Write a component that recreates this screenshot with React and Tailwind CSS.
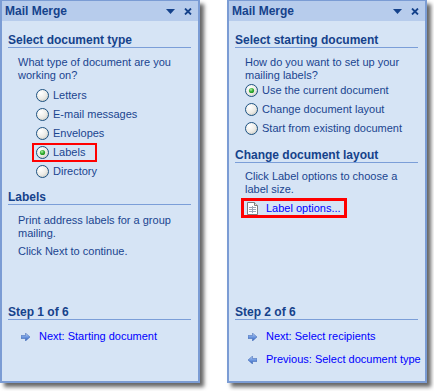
import React from "react";

const font = { fontFamily: '"Liberation Sans", Arial, sans-serif' };

function Radio({ checked }) {
  return (
    <svg width="13" height="13" viewBox="0 0 13 13" className="shrink-0">
      <defs>
        <radialGradient id="radioFill" cx="35%" cy="30%" r="80%">
          <stop offset="0" stopColor="#ffffff" />
          <stop offset="0.6" stopColor="#ecebe6" />
          <stop offset="1" stopColor="#c9c8c0" />
        </radialGradient>
        <radialGradient id="radioDot" cx="40%" cy="35%" r="70%">
          <stop offset="0" stopColor="#b6f2a8" />
          <stop offset="0.5" stopColor="#3cb43c" />
          <stop offset="1" stopColor="#1a8c1a" />
        </radialGradient>
      </defs>
      <circle cx="6.5" cy="6.5" r="6" fill="url(#radioFill)" stroke="#1c5180" strokeWidth="1" />
      {checked && <circle cx="6.5" cy="6.5" r="2.6" fill="url(#radioDot)" />}
    </svg>
  );
}

function Arrow({ back }) {
  return (
    <svg width="9" height="8" viewBox="0 0 9 8" className="shrink-0">
      <defs>
        <linearGradient id="arrowFill" x1="0" y1="0" x2="0" y2="1">
          <stop offset="0" stopColor="#b9d1f6" />
          <stop offset="0.5" stopColor="#6f99e0" />
          <stop offset="1" stopColor="#2f5fbf" />
        </linearGradient>
      </defs>
      <polygon
        points={back ? "9,2.5 4.5,2.5 4.5,0 0,4 4.5,8 4.5,5.5 9,5.5" : "0,2.5 4.5,2.5 4.5,0 9,4 4.5,8 4.5,5.5 0,5.5"}
        fill="url(#arrowFill)"
        stroke="#3a63b0"
        strokeWidth="0.5"
      />
    </svg>
  );
}

function LabelIcon() {
  return (
    <svg width="11" height="13" viewBox="0 0 11 13" className="shrink-0">
      <path d="M0.5 0.5 H7.5 L10.5 3.5 V12.5 H0.5 Z" fill="#ffffff" stroke="#7d7d7d" />
      <path d="M7.5 0.5 V3.5 H10.5" fill="#e4e4e4" stroke="#7d7d7d" />
      <g stroke="#9aa6b8" strokeWidth="1">
        <line x1="2" y1="5.5" x2="9" y2="5.5" />
        <line x1="2" y1="7.5" x2="9" y2="7.5" />
        <line x1="2" y1="9.5" x2="9" y2="9.5" />
        <line x1="5.5" y1="4" x2="5.5" y2="11" />
      </g>
    </svg>
  );
}

function TitleBar() {
  return (
    <div className="h-[20px] flex items-center justify-between bg-[#b7ccec] pl-[3px] pr-[6px]">
      <span className="text-[12px] font-bold text-[#15428b] leading-none">Mail Merge</span>
      <div className="flex items-center gap-[9px]">
        <svg width="9" height="5" viewBox="0 0 9 5">
          <polygon points="0,0 9,0 4.5,5" fill="#15428b" />
        </svg>
        <svg width="8" height="7" viewBox="0 0 8 7">
          <path d="M1 0.5 L7 6.5 M7 0.5 L1 6.5" stroke="#15428b" strokeWidth="1.8" />
        </svg>
      </div>
    </div>
  );
}

function Header({ children, className = "" }) {
  return (
    <div className={"text-[12px] font-bold leading-[13px] text-[#15428b] border-b border-[#7b9ed8] " + className}>
      {children}
    </div>
  );
}

function RadioRow({ label, checked }) {
  return (
    <div className="h-[19px] flex items-center gap-[4px]">
      <Radio checked={checked} />
      <span className="whitespace-nowrap">{label}</span>
    </div>
  );
}

function LinkRow({ label, back, className = "" }) {
  return (
    <div className={"h-[19px] flex items-center gap-[9px] pl-[13px] text-[#0000ff] " + className}>
      <Arrow back={back} />
      <span className="whitespace-nowrap">{label}</span>
    </div>
  );
}

function Panel({ children }) {
  return (
    <div className="w-[200px] h-[383px] shrink-0 flex flex-col bg-[#d6e4f5] border-x-2 border-b-2 border-t border-[#7b9cd4] shadow-[4px_4px_4px_rgba(0,0,0,0.6)]">
      <TitleBar />
      <div className="flex-1 flex flex-col pl-[6px] pr-[7px] text-[11px] text-[#1a4590]">{children}</div>
    </div>
  );
}

export default function App() {
  return (
    <div className="w-[434px] h-[391px] bg-white flex gap-[27px]" style={font}>
      <Panel>
        <Header className="mt-[13px]">Select document type</Header>
        <p className="mt-[8px] pl-[10px] leading-[13px]">
          What type of document are you
          <br />
          working on?
        </p>
        <div className="mt-[4px] pl-[28px]">
          <RadioRow label="Letters" />
          <RadioRow label="E-mail messages" />
          <RadioRow label="Envelopes" />
          <div className="relative">
            <RadioRow label="Labels" checked />
            <div className="absolute left-[-4px] top-0 w-[65px] h-[19px] border-2 border-[#ff0000]" />
          </div>
          <RadioRow label="Directory" />
        </div>
        <Header className="mt-[10px]">Labels</Header>
        <p className="mt-[9px] pl-[10px] leading-[13px]">
          Print address labels for a group
          <br />
          mailing.
        </p>
        <p className="mt-[5px] pl-[10px] leading-[13px]">Click Next to continue.</p>
        <div className="mt-auto pb-[35px]">
          <Header>Step 1 of 6</Header>
          <LinkRow label="Next: Starting document" className="mt-[7px]" />
        </div>
      </Panel>

      <Panel>
        <Header className="mt-[13px]">Select starting document</Header>
        <p className="mt-[8px] pl-[10px] leading-[13px]">
          How do you want to set up your
          <br />
          mailing labels?
        </p>
        <div className="mt-[-1px] pl-[10px]">
          <RadioRow label="Use the current document" checked />
          <RadioRow label="Change document layout" />
          <RadioRow label="Start from existing document" />
        </div>
        <Header className="mt-[11px]">Change document layout</Header>
        <p className="mt-[7px] pl-[10px] leading-[13px]">
          Click Label options to choose a
          <br />
          label size.
        </p>
        <div className="mt-[2px] ml-[6px] w-[106px] h-[20px] flex items-center gap-[8px] pl-[3px] border-[3px] border-[#ff0000] text-[#0000ff]">
          <LabelIcon />
          <span className="whitespace-nowrap">Label options...</span>
        </div>
        <div className="mt-auto pb-[12px]">
          <Header>Step 2 of 6</Header>
          <LinkRow label="Next: Select recipients" className="mt-[7px]" />
          <LinkRow label="Previous: Select document type" back className="mt-[4px]" />
        </div>
      </Panel>
    </div>
  );
}
